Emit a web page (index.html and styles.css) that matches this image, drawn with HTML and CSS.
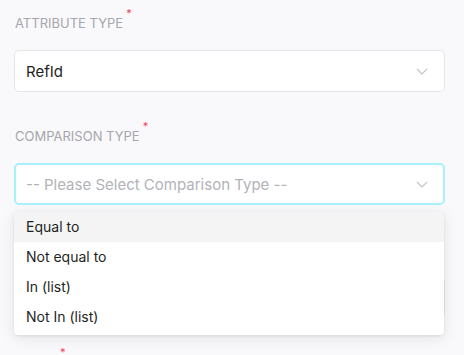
FILE: index.html
```html
<!DOCTYPE html>
<html lang="en">
<head>
    <meta charset="UTF-8">
    <meta name="viewport" content="width=device-width, initial-scale=1.0">
    <title>Rule Condition</title>
    <link rel="stylesheet" href="styles.css">
</head>
<body>

<div class="form">
    <div class="field">
        <label class="field-label">Attribute Type<span class="req">*</span></label>
        <div class="select">
            <span class="select-value">RefId</span>
            <svg class="chevron" width="12" height="7" viewBox="0 0 12 7"><path d="M1 1l5 5 5-5" fill="none" stroke="#c4c4ca" stroke-width="1.2"/></svg>
        </div>
    </div>

    <div class="field field-open">
        <label class="field-label">Comparison Type<span class="req">*</span></label>
        <div class="select select-focus">
            <span class="select-placeholder">-- Please Select Comparison Type --</span>
            <svg class="chevron" width="12" height="7" viewBox="0 0 12 7"><path d="M1 1l5 5 5-5" fill="none" stroke="#c4c4ca" stroke-width="1.2"/></svg>
        </div>
        <ul class="menu">
            <li class="menu-item active">Equal to</li>
            <li class="menu-item">Not equal to</li>
            <li class="menu-item">In (list)</li>
            <li class="menu-item">Not In (list)</li>
        </ul>
    </div>

    <!-- covered by the open menu -->
    <div class="field">
        <label class="field-label"></label>
        <div class="select"></div>
    </div>

    <div class="field">
        <label class="field-label">Value<span class="req">*</span></label>
        <div class="select"></div>
    </div>
</div>

</body>
</html>
```

FILE: styles.css
```css
html, body {
    height: 100%;
    overflow: hidden;
}

body {
    font-family: 'Inter', 'Liberation Sans', sans-serif;
    margin: 0;
    padding: 0;
    background: #f9f9fb;
    color: #1f1f23;
}

.form {
    display: flex;
    flex-direction: column;
    gap: 34px;
    padding: 13px 19px 0 14px;
}

.field {
    display: flex;
    flex-direction: column;
    gap: 17px;
    position: relative;
}

.field-label {
    display: block;
    height: 20px;
    line-height: 20px;
    padding-left: 1px;
    font-size: 13px;
    text-transform: uppercase;
    color: #a6a6ad;
}

.req {
    color: #f0445a;
    font-size: 11px;
    vertical-align: 11px;
    line-height: 0;
    margin-left: 3px;
}

.select {
    box-sizing: border-box;
    height: 42px;
    display: flex;
    align-items: center;
    justify-content: space-between;
    padding: 0 12px 0 11px;
    background: #fff;
    border: 1px solid #e6e6ea;
    border-radius: 5px;
    font-size: 15px;
}

.select-focus {
    border: 2px solid #a8f0fa;
    padding-left: 10px;
    padding-right: 11px;
}

.select-value {
    color: #1f1f23;
}

.select-placeholder {
    color: #b2b2b8;
}

.chevron {
    margin-right: 4px;
}

.menu {
    position: absolute;
    top: 86px;
    left: 0;
    right: 1px;
    z-index: 5;
    margin: 0;
    padding: 0 0 3px;
    list-style: none;
    background: #fff;
    border-radius: 0 0 4px 4px;
    box-shadow: 0 3px 14px rgba(30, 30, 50, 0.10), 0 1px 3px rgba(30, 30, 50, 0.08);
}

.menu-item {
    height: 30px;
    line-height: 30px;
    padding-left: 12px;
    font-size: 14px;
    color: #1f1f23;
}

.menu-item.active {
    background: #f4f4f5;
}
```
